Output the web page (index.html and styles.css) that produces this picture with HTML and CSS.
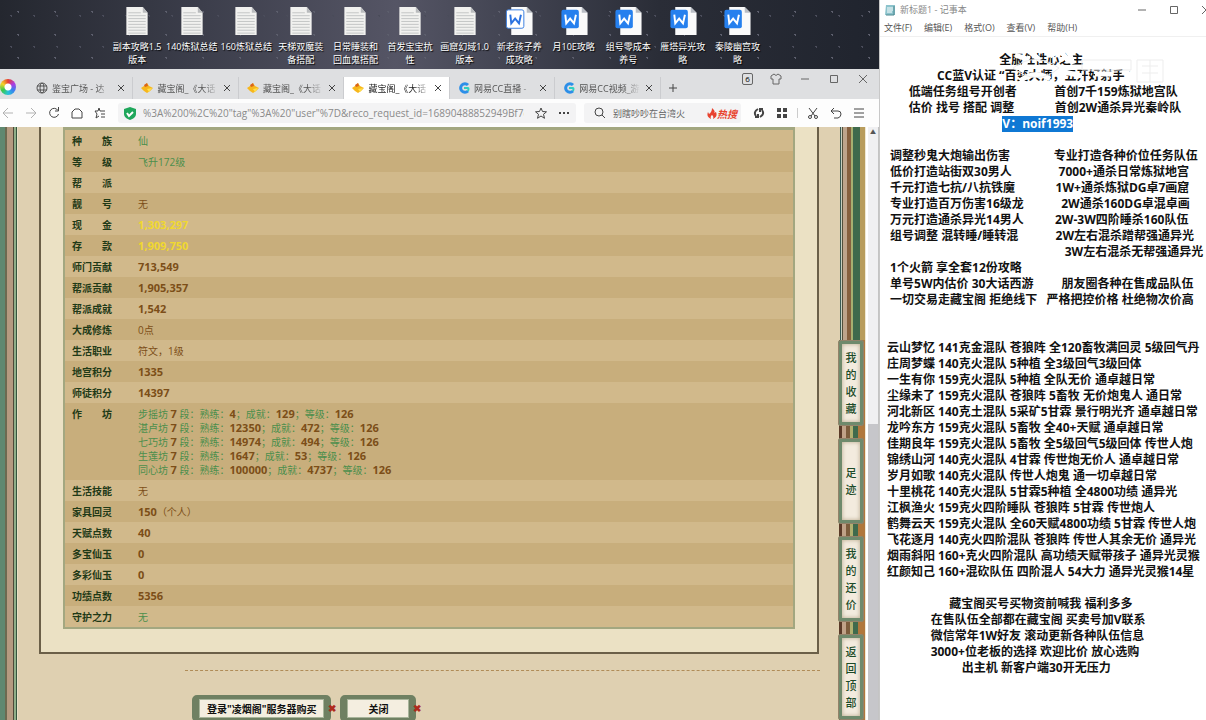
FILE: index.html
```html
<!DOCTYPE html>
<html lang="zh-CN">
<head>
    <meta charset="UTF-8">
    <meta name="viewport" content="width=device-width, initial-scale=1.0">
    <title>藏宝阁</title>
    <link rel="stylesheet" href="styles.css">
</head>
<body>
    <svg class="defs" aria-hidden="true">
        <symbol id="doc" viewBox="0 0 24 31">
            <path d="M1 1h17l5 6v23H1z" fill="#f1f1ef"/>
            <path d="M18 1v6h5z" fill="#b9bbbd"/>
            <path d="M3 7h13M3 10h18M3 13h18M3 16h18M3 19h18M3 22h18M3 25h18M3 28h18" stroke="#c3c5c5"/>
        </symbol>
        <symbol id="wps" viewBox="0 0 28 31">
            <path d="M6 1h16l6 6v23H6z" fill="#fafafa"/>
            <path d="M22 1v6h6z" fill="#b9bdc4"/>
            <rect x="1" y="4" width="18" height="19" rx="2" fill="#2680ee"/>
            <path d="M5 9l1 9 4-5 4 5 2-9" fill="none" stroke="#fff" stroke-width="2"/>
        </symbol>
        <symbol id="wps-light" viewBox="0 0 28 31">
            <path d="M6 1h16l6 6v23H6z" fill="#fafafa"/>
            <path d="M22 1v6h6z" fill="#b9bdc4"/>
            <rect x="1" y="4" width="18" height="19" rx="2" fill="#fff" stroke="#3b7fe0"/>
            <path d="M5 9l1 9 4-5 4 5 2-9" fill="none" stroke="#2b72e0" stroke-width="2"/>
        </symbol>
        <symbol id="gold" viewBox="0 0 12 12">
            <path d="M0 6l3-2 3-3 2 3 4 2-3 3-3 2-3-2z" fill="#f7b71c"/>
            <path d="M3 3l3-2 1 3-3 1z" fill="#d9641b"/>
            <path d="M6 7l5-1-3 4z" fill="#ffe04a"/>
        </symbol>
        <symbol id="cc" viewBox="0 0 12 12">
            <path d="M10 3a4.300 4.300 0 1 0 0 6" fill="none" stroke="#2c8fe8" stroke-width="3"/>
            <path d="M6 6h4q1 0 0 3" fill="none" stroke="#2fd0c0" stroke-width="2"/>
        </symbol>
        <symbol id="ico-close" viewBox="0 0 10 10"><path d="M2 2l6 6M8 2l-6 6"/></symbol>
    </svg>

    <div class="screen">
        <div class="left">
            <div class="desktop">
                <div class="shortcut"><svg><use href="#doc"/></svg><span>副本攻略1.5<br>版本</span></div>
                <div class="shortcut"><svg><use href="#doc"/></svg><span>140炼狱总结</span></div>
                <div class="shortcut"><svg><use href="#doc"/></svg><span>160炼狱总结</span></div>
                <div class="shortcut"><svg><use href="#doc"/></svg><span>天梯双魔装<br>备搭配</span></div>
                <div class="shortcut"><svg><use href="#doc"/></svg><span>日常睡装和<br>回血鬼搭配</span></div>
                <div class="shortcut"><svg><use href="#doc"/></svg><span>首发宝宝抗<br>性</span></div>
                <div class="shortcut"><svg><use href="#doc"/></svg><span>画窟幻域1.0<br>版本</span></div>
                <div class="shortcut"><svg><use href="#wps-light"/></svg><span>新老孩子养<br>成攻略</span></div>
                <div class="shortcut"><svg><use href="#wps"/></svg><span>月10E攻略</span></div>
                <div class="shortcut"><svg><use href="#wps"/></svg><span>组号零成本<br>养号</span></div>
                <div class="shortcut"><svg><use href="#wps"/></svg><span>雁塔异光攻<br>略</span></div>
                <div class="shortcut"><svg><use href="#wps"/></svg><span>秦陵幽宫攻<br>略</span></div>
            </div>

            <div class="browser">
                <div class="tabbar">
                    <div class="logo"></div>
                    <div class="tab">
                        <svg class="fav line" viewBox="0 0 12 12"><circle cx="6" cy="6" r="5"/><ellipse cx="6" cy="6" rx="2" ry="5"/><path d="M1 4h10M1 8h10"/></svg>
                        <span>鉴宝广场 - 达</span>
                        <button aria-label="关闭标签"><svg><use href="#ico-close"/></svg></button>
                    </div>
                    <div class="tab">
                        <svg class="fav"><use href="#gold"/></svg>
                        <span>藏宝阁_《大话</span>
                        <button aria-label="关闭标签"><svg><use href="#ico-close"/></svg></button>
                    </div>
                    <div class="tab">
                        <svg class="fav"><use href="#gold"/></svg>
                        <span>藏宝阁_《大话</span>
                        <button aria-label="关闭标签"><svg><use href="#ico-close"/></svg></button>
                    </div>
                    <div class="tab active">
                        <svg class="fav"><use href="#gold"/></svg>
                        <span>藏宝阁_《大话</span>
                        <button aria-label="关闭标签"><svg><use href="#ico-close"/></svg></button>
                    </div>
                    <div class="tab">
                        <svg class="fav"><use href="#cc"/></svg>
                        <span>网易CC直播 -</span>
                        <button aria-label="关闭标签"><svg><use href="#ico-close"/></svg></button>
                    </div>
                    <div class="tab">
                        <svg class="fav"><use href="#cc"/></svg>
                        <span>网易CC视频_游</span>
                        <button aria-label="关闭标签"><svg><use href="#ico-close"/></svg></button>
                    </div>
                    <button class="newtab" aria-label="新标签"><svg viewBox="0 0 10 10"><path d="M5 1v8M1 5h8"/></svg></button>
                    <div class="winbtns">
                        <button class="count">6</button>
                        <button aria-label="皮肤"><svg viewBox="0 0 12 12"><path d="M4 1L1 3v3h2v5h6V6h2V3L8 1Q6 4 4 1z"/></svg></button>
                        <button aria-label="最小化"><svg viewBox="0 0 12 12"><path d="M2 6h8"/></svg></button>
                        <button aria-label="最大化"><svg viewBox="0 0 12 12"><path d="M2.500 2.500h7v7h-7z"/></svg></button>
                        <button aria-label="关闭"><svg viewBox="0 0 12 12"><path d="M2 2l8 8M10 2l-8 8"/></svg></button>
                    </div>
                </div>

                <div class="toolbar">
                    <div class="nav">
                        <button class="off" aria-label="后退"><svg viewBox="0 0 12 12"><path d="M6 1L1 6l5 5M1 6h10"/></svg></button>
                        <button class="off" aria-label="前进"><svg viewBox="0 0 12 12"><path d="M6 1l5 5-5 5M11 6H1"/></svg></button>
                        <button aria-label="刷新"><svg viewBox="0 0 12 12"><path d="M10 3.500A4.500 4.500 0 1 0 10.500 7M10.500 0v4H7"/></svg></button>
                        <button aria-label="主页"><svg viewBox="0 0 12 12"><path d="M1 11V5l3-3h4l3 3v6z"/></svg></button>
                        <button aria-label="收藏夹"><svg viewBox="0 0 12 12"><path d="M5 1L4 4H1l2 3-1 4 3-2M5 1l1 3h5M7 7h4M7 10h4"/></svg></button>
                    </div>
                    <div class="address">
                        <svg class="shield" viewBox="0 0 12 13"><path d="M6 0l6 2v5c0 3-3 5-6 6-3-1-6-3-6-6V2z" fill="#1fa75b"/><path d="M3 6l2 3 4-4" fill="none" stroke="#fff" stroke-width="2"/></svg>
                        <input type="text" aria-label="地址" value="%3A%200%2C%20&quot;tag&quot;%3A%20&quot;user&quot;%7D&amp;reco_request_id=16890488852949Bf7e">
                        <button aria-label="收藏"><svg viewBox="0 0 12 12"><path d="M6 1l1.500 3.500 4 .3-3 2.500 1 4L6 9l-3.500 2.300 1-4-3-2.500 4-.3z"/></svg></button>
                        <button aria-label="更多"><svg viewBox="0 0 12 12"><path d="M1 6h2M5 6h2M9 6h2" stroke-width="2"/></svg></button>
                    </div>
                    <div class="search">
                        <svg viewBox="0 0 12 12"><circle cx="5" cy="5" r="4"/><path d="M8 8l3 3"/></svg>
                        <input type="text" aria-label="搜索" value="别瞎吵吵在台湾火">
                        <a href="#"><svg viewBox="0 0 10 11"><path d="M5 0q4 3 2 5l2-1q2 5-3 7 1-3-1-4-2 1-1 4-5-2-3-7l1 2q3-2 3-6z"/></svg>热搜</a>
                    </div>
                    <div class="tools">
                        <button aria-label="同步"><svg viewBox="0 0 12 12"><path d="M5 2Q0 5 3 9M2 10h3V7M7 10q5-3 2-7M10 2H7v3" stroke-width="2"/></svg></button>
                        <button aria-label="应用"><svg viewBox="0 0 12 12"><path d="M1 1h4v4H1zM7 1h4v4H7zM1 7h4v4H1zM7 7h4v4H7z" fill="#444" stroke="none"/></svg></button>
                        <i></i>
                        <button aria-label="截图"><svg viewBox="0 0 12 12"><path d="M2 1l6 8M10 1L4 9"/><circle cx="3" cy="10" r="1.500"/><circle cx="9" cy="10" r="1.500"/></svg></button>
                        <button aria-label="恢复"><svg viewBox="0 0 12 12"><path d="M4 1L1 4l3 3M1 4h7q3 0 3 3t-3 4H4"/></svg></button>
                        <button aria-label="菜单"><svg viewBox="0 0 12 12"><path d="M1 2h10M1 6h10M1 10h10"/></svg></button>
                    </div>
                </div>

                <div class="viewport">
                    <div class="edge edge-left"></div>
                    <div class="page">
                        <div class="panel">
                            <table class="info">
                                <tr><th>种　　族</th><td class="green">仙</td></tr>
                                <tr><th>等　　级</th><td class="green">飞升172级</td></tr>
                                <tr><th>帮　　派</th><td></td></tr>
                                <tr><th>靓　　号</th><td>无</td></tr>
                                <tr><th>现　　金</th><td class="yellow"><b>1,303,297</b></td></tr>
                                <tr><th>存　　款</th><td class="yellow"><b>1,909,750</b></td></tr>
                                <tr><th>师门贡献</th><td><b>713,549</b></td></tr>
                                <tr><th>帮派贡献</th><td><b>1,905,357</b></td></tr>
                                <tr><th>帮派成就</th><td><b>1,542</b></td></tr>
                                <tr><th>大成修炼</th><td>0点</td></tr>
                                <tr><th>生活职业</th><td>符文，1级</td></tr>
                                <tr><th>地宫积分</th><td><b>1335</b></td></tr>
                                <tr><th>师徒积分</th><td><b>14397</b></td></tr>
                                <tr>
                                    <th>作　　坊</th>
                                    <td class="green">
                                        步摇坊 <b>7</b> 段：熟练：<b>4</b>；成就：<b>129</b>；等级：<b>126</b><br>
                                        湛卢坊 <b>7</b> 段：熟练：<b>12350</b>；成就：<b>472</b>；等级：<b>126</b><br>
                                        七巧坊 <b>7</b> 段：熟练：<b>14974</b>；成就：<b>494</b>；等级：<b>126</b><br>
                                        生莲坊 <b>7</b> 段：熟练：<b>1647</b>；成就：<b>53</b>；等级：<b>126</b><br>
                                        同心坊 <b>7</b> 段：熟练：<b>100000</b>；成就：<b>4737</b>；等级：<b>126</b>
                                    </td>
                                </tr>
                                <tr><th>生活技能</th><td>无</td></tr>
                                <tr><th>家具回灵</th><td><b>150</b>（个人）</td></tr>
                                <tr><th>天赋点数</th><td><b>40</b></td></tr>
                                <tr><th>多宝仙玉</th><td><b>0</b></td></tr>
                                <tr><th>多彩仙玉</th><td><b>0</b></td></tr>
                                <tr><th>功绩点数</th><td><b>5356</b></td></tr>
                                <tr><th>守护之力</th><td class="green">无</td></tr>
                            </table>
                        </div>
                        <div class="divider"></div>
                        <div class="actions">
                            <button>登录"凌烟阁"服务器购买</button>
                            <button>关闭</button>
                        </div>
                    </div>
                    <div class="edge edge-right"></div>
                    <div class="scrollbar"><span>▲</span><div class="thumb"></div></div>
                    <nav class="sidenav">
                        <a href="#"><span>我的收藏</span></a>
                        <a href="#"><span>足迹</span></a>
                        <a href="#"><span>我的还价</span></a>
                        <a href="#"><span>返回顶部</span></a>
                    </nav>
                </div>
            </div>
        </div>

        <div class="notepad">
            <div class="titlebar">
                <svg viewBox="0 0 12 12"><path d="M2 1h9v10H1z" fill="#8cc3cc"/><path d="M3 4h6M3 6h6M3 8h5" stroke="#fff"/><path d="M10 2v9H2" fill="none" stroke="#4c8890"/></svg>
                <span>新标题1 - 记事本</span>
                <div class="winbtns">
                    <button aria-label="最小化"><svg viewBox="0 0 12 12"><path d="M2 6h8"/></svg></button>
                    <button aria-label="最大化"><svg viewBox="0 0 12 12"><path d="M2.500 2.500h7v7h-7z"/></svg></button>
                    <button aria-label="关闭"><svg viewBox="0 0 12 12"><path d="M2 2l8 8M10 2l-8 8"/></svg></button>
                </div>
            </div>
            <div class="menubar">
                <button>文件(F)</button>
                <button>编辑(E)</button>
                <button>格式(O)</button>
                <button>查看(V)</button>
                <button>帮助(H)</button>
            </div>
            <div class="text" role="textbox" aria-multiline="true" contenteditable="true" spellcheck="false">                                    全服任性心之主
                CC蓝V认证 “百变大师，五开好射手”
       低端任务组号开创者            首创7千159炼狱地宫队
       估价 找号 搭配 调整             首创2W通杀异光秦岭队
                                     <mark>V：noif1993</mark>

 调整秒鬼大炮输出伤害              专业打造各种价位任务队伍
 低价打造站街双30男人               7000+通杀日常炼狱地宫
 千元打造七抗/八抗铁魔             1W+通杀炼狱DG卓7画窟
 专业打造百万伤害16级龙            2W通杀160DG卓混卓画
 万元打造通杀异光14男人          2W-3W四阶睡杀160队伍
 组号调整 混转睡/睡转混            2W左右混杀蹭帮强通异光
                                                         3W左右混杀无帮强通异光
 1个火箭 享全套12份攻略
 单号5W内估价 30大话西游         朋友圈各种在售成品队伍
 一切交易走藏宝阁 拒绝线下   严格把控价格 杜绝物次价高


云山梦忆 141克金混队 苍狼阵 全120畜牧满回灵 5级回气丹
庄周梦蝶 140克火混队 5种植 全3级回气3级回体
一生有你 159克火混队 5种植 全队无价 通卓越日常
尘缘未了 159克火混队 苍狼阵 5畜牧 无价炮鬼人 通日常
河北新区 140克土混队 5采矿5甘霖 景行明光齐 通卓越日常
龙吟东方 159克火混队 5畜牧 全40+天赋 通卓越日常
佳期良年 159克火混队 5畜牧 全5级回气5级回体 传世人炮
锦绣山河 140克火混队 4甘霖 传世炮无价人 通卓越日常
岁月如歌 140克火混队 传世人炮鬼 通一切卓越日常
十里桃花 140克火混队 5甘霖5种植 全4800功绩 通异光
江枫渔火 159克火四阶睡队 苍狼阵 5甘霖 传世炮人
鹤舞云天 159克火混队 全60天赋4800功绩 5甘霖 传世人炮
飞花逐月 140克火四阶混队 苍狼阵 传世人其余无价 通异光
烟雨斜阳 160+克火四阶混队 高功绩天赋带孩子 通异光灵猴
红颜知己 160+混砍队伍 四阶混人 54大力 通异光灵猴14星

                    藏宝阁买号买物资前喊我 福利多多
              在售队伍全部都在藏宝阁 买卖号加V联系
              微信常年1W好友 滚动更新各种队伍信息
              3000+位老板的选择 欢迎比价 放心选购
                        出主机 新客户端30开无压力</div>
            <svg class="watermark" viewBox="0 0 170 40" aria-hidden="true">
                <path d="M13 7l12 4-6 13M28 4l10 8M48 8l10-6 9 12M67 4l4 12M18 33q15-12 30-2M58 23l22 5M93 26h18M120 24l12 3" stroke="#fff" stroke-width="5" fill="none"/>
                <path d="M11 20Q33 3 57 20Q35 39 11 20zM80 12h49v10H80zM135 12h26v22h-26zM140 18h16M140 25h16M148 12v22" fill="none" stroke="#ededed" stroke-width="1"/>
            </svg>
        </div>
    </div>
</body>
</html>
```
FILE: styles.css
```css
* {
    box-sizing: border-box;
}
body {
    margin: 0;
    font-family: "Open Sans", "Noto Sans CJK SC", sans-serif;
    background-color: #fff;
}
button {
    font-family: inherit;
    padding: 0;
    border: none;
    background: none;
    cursor: pointer;
}
input {
    font-family: inherit;
    border: none;
    outline: none;
    padding: 0;
    min-width: 0;
    background: none;
    color: #8a8a8a;
}
svg {
    flex: none;
}
.defs {
    position: absolute;
    width: 0;
    height: 0;
}
.screen {
    display: grid;
    grid-template-columns: 879fr 327fr;
    height: 100vh;
    overflow: hidden;
}
.left {
    display: flex;
    flex-direction: column;
    min-width: 0;
    min-height: 0;
}

/* desktop */
.desktop {
    display: grid;
    grid-template-columns: repeat(12, 1fr);
    height: 69px;
    padding: 6px 13% 0 12.500%;
    background-color: #30323d;
    background-image:
        radial-gradient(circle, #5c5e6c 1px, transparent 1px),
        radial-gradient(circle, #4a4c5a 1px, transparent 1px),
        linear-gradient(90deg, #24272f 0, #3b3d4a 22%, #555565 45%, #424452 58%, #2a2d37 75%, #20242e 100%);
    background-size: 37px 23px, 23px 31px, auto;
}
.shortcut {
    display: flex;
    flex-direction: column;
    align-items: center;
    gap: 4px;
    color: #fff;
    font-size: 9px;
    line-height: 13px;
    text-align: center;
    white-space: nowrap;
    text-shadow: 1px 1px 1px #000;
}
.shortcut svg {
    width: 28px;
    height: 30px;
}

/* browser */
.browser {
    flex: 1;
    display: flex;
    flex-direction: column;
    min-height: 0;
}
.browser svg {
    fill: none;
    stroke: #444;
}
.tabbar {
    display: flex;
    align-items: flex-end;
    height: 30px;
    background-color: #dedfe1;
}
.logo {
    flex: none;
    width: 16px;
    height: 16px;
    margin: 0 12px 4px 0;
    border-radius: 50%;
    background: radial-gradient(circle, #fff 3px, transparent 4px), conic-gradient(#e8402f, #b03ce0, #3c7df0, #25c3d8, #3cc84a, #f5d428, #e8402f);
}
.tab {
    display: flex;
    align-items: center;
    gap: 4px;
    width: 12%;
    height: 22px;
    padding: 0 6px 0 8px;
    font-size: 9px;
    color: #555;
    border-right: 1px solid #cbcccf;
}
.tab.active {
    background-color: #fff;
    color: #222;
}
.tab span {
    flex: 1;
    white-space: nowrap;
    mask-image: linear-gradient(90deg, #000 75%, transparent);
}
.tab .fav {
    width: 12px;
    height: 12px;
    stroke: none;
}
.tab .line {
    stroke: #555;
}
.tab button svg, .newtab svg {
    display: block;
    width: 10px;
    height: 10px;
}
.newtab {
    margin: 0 7px 6px;
}
.winbtns {
    display: flex;
    gap: 17px;
    margin-left: auto;
}
.winbtns svg {
    display: block;
    width: 12px;
    height: 12px;
    fill: none;
    stroke: #666;
}
.tabbar .winbtns {
    align-self: flex-start;
    padding: 4px 10px 0 0;
}
.count {
    width: 11px;
    height: 12px;
    border: 1px solid #666;
    border-radius: 2px;
    font-size: 8px;
    line-height: 10px;
}
.toolbar {
    display: flex;
    align-items: center;
    height: 28px;
    background-color: #fdfdfd;
}
.toolbar svg {
    display: block;
    width: 12px;
    height: 12px;
}
.nav {
    display: flex;
    gap: 11px;
    padding: 0 12px 0 2px;
}
.nav .off {
    opacity: 0.4;
}
.address, .search {
    display: flex;
    align-items: center;
    height: 20px;
    background-color: #f3f3f4;
    border-radius: 3px;
}
.address {
    flex: 468;
    gap: 11px;
    padding: 0 6px;
}
.address .shield {
    stroke: none;
    height: 13px;
}
.address input {
    flex: 1;
    font-size: 10px;
    margin-left: -4px;
}
.search {
    flex: 150;
    gap: 7px;
    margin-left: 8px;
    padding: 0 4px 0 10px;
}
.search input {
    flex: 1;
    width: 0;
    font-size: 9px;
    color: #666;
}
.search a {
    display: flex;
    align-items: center;
    font-size: 10px;
    font-weight: bold;
    font-style: italic;
    color: #e8432f;
    text-decoration: none;
}
.search a svg {
    width: 10px;
    height: 11px;
    fill: #e8432f;
    stroke: none;
}
.tools {
    display: flex;
    align-items: center;
    gap: 11px;
    padding: 0 14px 0 12px;
}
.tools i {
    width: 1px;
    height: 10px;
    margin: 0 -2px;
    background-color: #ccc;
}

/* page */
.viewport {
    position: relative;
    flex: 1;
    display: flex;
    min-height: 0;
    overflow: hidden;
    background-color: #dfd0b1;
}
.edge {
    flex: none;
}
.edge-left {
    width: 18px;
    background: linear-gradient(90deg, #5f8870 0 5px, #6c6a50 5px 7px, #b59a80 7px 13px, #4f4a38 13px 14px, #8fae88 14px 16px, #35553c 16px 17px, #e9e0c4 17px);
}
.edge-right {
    width: 26px;
    background: linear-gradient(90deg, #3a5a55 0 1px, #c8d0c0 1px 2px, #54503c 2px 3px, #bda48c 3px 7px, #86603f 7px 11px, #a8b070 11px 13px, #3f6a4c 13px 20px, #b89c5c 20px 25px, #efe8d4 25px);
}
.page {
    flex: 1;
    min-width: 0;
}
.panel {
    margin: 0 21px;
    padding: 0 22px 23px;
    background-color: #ebe1c4;
    border: 2px solid #6b5f48;
    border-top: none;
}
.info {
    width: 100%;
    border-collapse: separate;
    border-spacing: 0;
    border: 2px solid #a3a780;
    border-top-width: 3px;
    background-color: #d1b98b;
    color: #7c4e18;
    font-size: 10px;
    line-height: 14px;
}
.info tr:nth-child(even) {
    background-color: #c8ae7c;
}
.info th, .info td {
    height: 21px;
    padding: 4px 0 3px;
    text-align: left;
    vertical-align: top;
}
.info th {
    width: 73px;
    padding-left: 7px;
    color: #1f3a17;
}
.info b {
    font-size: 11px;
    line-height: 14px;
    color: #7c4e18;
}
.info .green {
    color: #4c8f4c;
}
.info .yellow b {
    color: #f0d830;
}
.divider {
    margin: 16px 20px 0 167px;
    border-top: 1px dashed #b08c58;
}
.actions {
    display: flex;
    gap: 9px;
    margin: 24px 0 0 174px;
}
.actions button {
    position: relative;
    height: 27px;
    padding: 0 8px;
    border: 4px solid #6f8062;
    border-left-width: 7px;
    border-right-width: 7px;
    border-radius: 5px;
    background-color: #f4eee0;
    box-shadow: inset 0 0 0 1px #a8b49a;
    font-size: 10px;
    font-weight: bold;
    color: #111;
}
.actions button:last-child {
    padding: 0 21px;
}
.actions button::after {
    content: "✖";
    position: absolute;
    right: -12px;
    top: 2px;
    font-size: 10px;
    color: #b02a1c;
}
.scrollbar {
    display: flex;
    flex-direction: column;
    width: 13px;
    background-color: #f0f0f2;
    border-left: 2px solid #fff;
    border-right: 1px solid #c4c4c4;
    text-align: center;
    font-size: 6px;
    color: #555;
}
.thumb {
    margin-top: auto;
    height: 50%;
    background-color: #c6c6ca;
}
.sidenav {
    position: absolute;
    right: 14px;
    bottom: 0;
    display: flex;
    flex-direction: column;
    gap: 12px;
    padding: 0 1px;
    background: linear-gradient(90deg, transparent 2px, #5a3a28 2px 5px, #c0a288 5px 9px, #7c5c3c 9px 13px, #b0b070 13px 16px, #3f6a4c 16px 21px, #b0773c 21px);
}
.sidenav a {
    display: flex;
    align-items: center;
    justify-content: center;
    width: 26px;
    height: 86px;
    border: 4px solid #6f8a6c;
    border-radius: 3px;
    outline: 1px solid #93826a;
    outline-offset: -1px;
    background-color: #f3ebde;
    box-shadow: inset 0 0 4px #b8a88c;
    font-size: 11px;
    font-weight: 500;
    line-height: 17px;
    color: #1c4a28;
    text-decoration: none;
}
.sidenav span {
    width: 11px;
}

/* notepad */
.notepad {
    position: relative;
    display: flex;
    flex-direction: column;
    min-width: 0;
    background-color: #fff;
    border-left: 1px solid #c8c8c8;
    overflow: hidden;
}
.titlebar {
    display: flex;
    align-items: center;
    gap: 4px;
    height: 19px;
    padding-left: 4px;
    font-size: 9px;
    color: #888;
}
.titlebar > svg {
    width: 12px;
    height: 12px;
}
.titlebar .winbtns {
    gap: 20px;
    margin-right: -6px;
}
.menubar {
    display: flex;
    gap: 12px;
    height: 18px;
    padding-left: 4px;
    border-bottom: 1px solid #f0f0f0;
}
.menubar button {
    font-size: 9px;
    color: #555;
}
.text {
    padding: 15px 0 0 7px;
    font-size: 12px;
    font-weight: bold;
    line-height: 16px;
    color: #111;
    white-space: pre;
    outline: none;
}
.text mark {
    display: inline-block;
    height: 16px;
    vertical-align: top;
    background-color: #0f78d4;
    color: #fff;
}
.watermark {
    position: absolute;
    left: 122px;
    top: 48px;
    width: 170px;
    height: 40px;
    pointer-events: none;
}
```
